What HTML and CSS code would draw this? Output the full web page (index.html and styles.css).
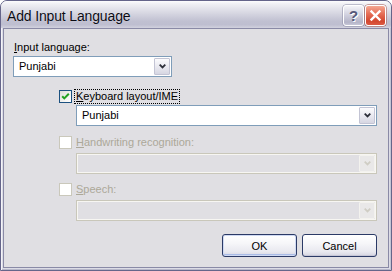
FILE: index.html
```html
<!DOCTYPE html>
<html>
<head>
<meta charset="utf-8">
<title>Add Input Language</title>
<link rel="stylesheet" href="styles.css">
</head>
<body>
<div class="window">
  <div class="titlebar">
    <span class="title">Add Input Language</span>
    <div class="caption-btns">
      <span class="cbtn help">?</span>
      <span class="cbtn close"><svg width="19" height="19" viewBox="0 0 19 19"><path d="M5.5 5.5 L13.5 13.5 M13.5 5.5 L5.5 13.5" stroke="#fff" stroke-width="2.4" stroke-linecap="square"/></svg></span>
    </div>
  </div>
  <div class="client">
    <div class="lbl top-lbl"><u>I</u>nput language:</div>
    <div class="combo combo-lang">
      <span class="combo-text">Punjabi</span>
      <span class="drop"><svg width="7" height="5" viewBox="0 0 7 5"><path d="M0.7 0.7 L3.5 3.5 L6.3 0.7" fill="none" stroke="#2d2f3a" stroke-width="1.8"/></svg></span>
    </div>
    <div class="group">
      <div class="check-row row-kbd">
        <span class="checkbox checked"><svg width="11" height="11" viewBox="0 0 11 11"><path d="M2.2 5.2 L4.3 7.4 L8.8 2.8" fill="none" stroke="#21a121" stroke-width="2"/></svg></span>
        <span class="check-label focus"><u>K</u>eyboard layout/IME</span>
      </div>
      <div class="combo wide combo-kbd">
        <span class="combo-text">Punjabi</span>
        <span class="drop"><svg width="7" height="5" viewBox="0 0 7 5"><path d="M0.7 0.7 L3.5 3.5 L6.3 0.7" fill="none" stroke="#2d2f3a" stroke-width="1.8"/></svg></span>
      </div>
      <div class="check-row row-hw disabled">
        <span class="checkbox"></span>
        <span class="check-label"><u>H</u>andwriting recognition:</span>
      </div>
      <div class="combo wide disabled combo-hw">
        <span class="combo-text"></span>
        <span class="drop"><svg width="7" height="5" viewBox="0 0 7 5"><path d="M0.7 0.7 L3.5 3.5 L6.3 0.7" fill="none" stroke="#cfcdc4" stroke-width="1.8"/></svg></span>
      </div>
      <div class="check-row row-sp disabled">
        <span class="checkbox"></span>
        <span class="check-label"><u>S</u>peech:</span>
      </div>
      <div class="combo wide disabled combo-sp">
        <span class="combo-text"></span>
        <span class="drop"><svg width="7" height="5" viewBox="0 0 7 5"><path d="M0.7 0.7 L3.5 3.5 L6.3 0.7" fill="none" stroke="#cfcdc4" stroke-width="1.8"/></svg></span>
      </div>
    </div>
    <div class="actions">
      <button class="btn default">OK</button>
      <button class="btn">Cancel</button>
    </div>
  </div>
</div>
</body>
</html>
```
FILE: styles.css
```css
* { box-sizing: border-box; }
html, body { margin: 0; padding: 0; }
body {
  width: 392px;
  height: 271px;
  overflow: hidden;
  background: #ffffff;
  font-family: "Liberation Sans", Arial, sans-serif;
  font-size: 11px;
  color: #000;
}
.window {
  width: 392px;
  height: 271px;
  border: 1px solid #65658a;
  border-radius: 7px 7px 0 0;
  background: #dcdce6;
  padding: 0 2px 2px 2px;
  display: flex;
  flex-direction: column;
  box-shadow: inset 1px 0 0 #f4f4f8, inset -1px 0 0 #c4c4d4, inset 0 -1px 0 #b8b8ca;
}
.titlebar {
  height: 27px;
  margin: 0 -2px;
  padding: 0 5px 0 6px;
  display: flex;
  align-items: flex-start;
  justify-content: space-between;
  border-radius: 6px 6px 0 0;
  background: linear-gradient(to bottom, #fdfdfe 0%, #f1f1f5 10%, #e2e2ea 30%, #cfcfdc 55%, #c0c0d1 75%, #bebed0 88%, #d2d2de 100%);
}
.title {
  font-family: "Liberation Sans", Arial, sans-serif;
  font-size: 14px;
  line-height: 16px;
  padding-top: 7px;
  color: #0b0b14;
  letter-spacing: -0.15px;
  text-shadow: 0 0 1px rgba(255,255,255,0.6);
}
.caption-btns {
  display: flex;
  gap: 1px;
  padding-top: 4px;
}
.cbtn {
  width: 21px;
  height: 21px;
  border: 1px solid #ffffff;
  border-radius: 3px;
  display: flex;
  align-items: center;
  justify-content: center;
  box-shadow: 0 0 0 0.5px #8a8aa4;
}
.help {
  background: linear-gradient(to bottom, #f4f4f8, #d2d2e0 45%, #b4b4c8 85%, #c6c6d6);
  color: #56587a;
  font-weight: bold;
  font-size: 15px;
  line-height: 19px;
  text-shadow: 1px 1px 0 #ffffff;
}
.close {
  background: linear-gradient(to bottom, #f4a893, #e66f58 40%, #d3472f 80%, #dc5a44);
  box-shadow: 0 0 0 0.5px #a0504a;
}
.client {
  flex: 1;
  border: 1px solid #8a8aa6;
  background: #e0dfe3;
  padding: 12px 11px 10px 9px;
  display: flex;
  flex-direction: column;
}
.lbl {
  line-height: 13px;
  padding-left: 1px;
}
u { text-decoration: underline; text-underline-offset: 1px; }
.combo {
  display: flex;
  height: 21px;
  border: 1px solid #7f9db9;
  background: #ffffff;
  padding: 1px;
}
.combo-lang {
  width: 159px;
  margin-top: 2px;
}
.combo-text {
  flex: 1;
  padding-left: 4px;
  line-height: 17px;
}
.drop {
  width: 16px;
  height: 17px;
  border: 1px solid #c3c4d4;
  border-radius: 1px;
  background: linear-gradient(to bottom, #fbfbfd, #e6e6ee 60%, #d6d6e2);
  display: flex;
  align-items: center;
  justify-content: center;
}
.group {
  margin-left: 46px;
  display: flex;
  flex-direction: column;
  align-items: flex-start;
}
.check-row {
  height: 15px;
  display: flex;
  align-items: center;
}
.row-kbd { margin-top: 12px; }
.row-hw { margin-top: 9px; }
.row-sp { margin-top: 8px; }
.checkbox {
  width: 13px;
  height: 13px;
  border: 1px solid #1c5180;
  background: linear-gradient(135deg, #dcdcd7, #f6f6f4 70%, #ffffff);
  display: flex;
  align-items: center;
  justify-content: center;
}
.check-label {
  margin-left: 2px;
  height: 15px;
  line-height: 13px;
  padding: 0 1px 0 1px;
  border: 1px solid transparent;
}
.check-label.focus {
  border: 1px dotted #000;
}
.disabled .checkbox {
  border-color: #cac8bb;
  background: #ffffff;
}
.disabled .check-label {
  color: #aca899;
}
.wide {
  width: 301px;
  margin-left: 17px;
}
.combo-kbd { margin-top: 1px; }
.combo-hw, .combo-sp { margin-top: 3px; }
.combo.disabled {
  border-color: #c9c7ba;
  background: #e0dfe3;
  box-shadow: inset 0 0 0 1px #f7f6f2;
}
.combo.disabled .drop {
  border-color: #f3f2ee;
  background: #e9e8e8;
}
.actions {
  margin-top: 13px;
  display: flex;
  justify-content: flex-end;
  gap: 5px;
}
.btn {
  width: 75px;
  height: 23px;
  border: 1px solid #2b3a66;
  border-radius: 3px;
  background: linear-gradient(to bottom, #ffffff, #f6f6f9 40%, #e8e8ef 80%, #d4d4e0);
  font-family: "Liberation Sans", Arial, sans-serif;
  font-size: 11px;
  color: #000;
  padding: 0;
  box-shadow: inset 0 -1px 0 #c6c6d6;
}
.btn.default {
  box-shadow: inset 0 0 0 1px #cfd9f2, inset 0 -2px 0 #a9bbe6;
}
```
